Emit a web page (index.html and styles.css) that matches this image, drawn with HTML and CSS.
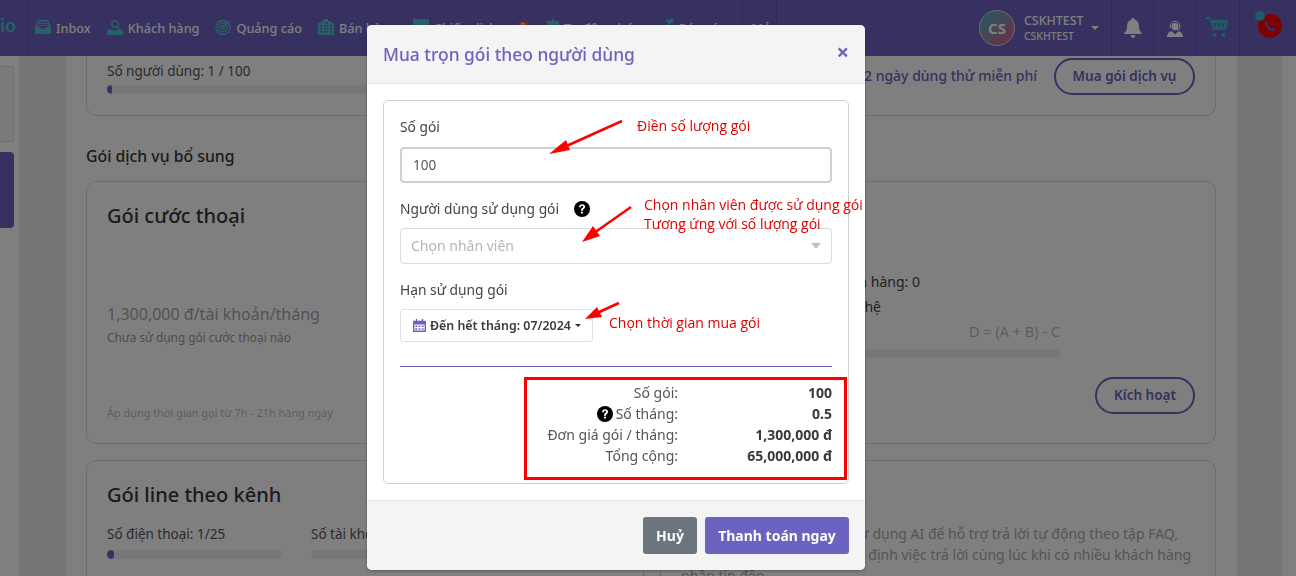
FILE: index.html
```html
<!DOCTYPE html>
<html lang="vi">
<head>
<meta charset="utf-8">
<title>Mua trọn gói theo người dùng</title>
<link rel="stylesheet" href="styles.css">
</head>
<body>
<div class="app">
  <header class="topbar">
    <div class="brand">io</div>
    <nav class="nav">
      <a class="nav-item"><svg class="nav-icon" viewBox="0 0 16 16"><path d="M3 1h10l3 7v7H0V8zM2.200 8H5l1 2h4l1-2h2.800L12 2.500H4z"/><path d="M4 4h8v1H4zM3.500 6h9v1h-9z"/></svg>Inbox</a>
      <a class="nav-item"><svg class="nav-icon" viewBox="0 0 16 16"><path d="M8 1a4 4 0 0 1 3 6.700l2 2.300-1 .7-2-2.300A4 4 0 1 1 8 1zm0 1.500a2.500 2.500 0 1 0 0 5 2.500 2.500 0 0 0 0-5z"/><path d="M0 16v-3c0-2 2-3 4-3l4 2 4-2c2 0 4 1 4 3v3z"/></svg>Khách hàng</a>
      <a class="nav-item"><svg class="nav-icon nav-icon-wide" viewBox="0 0 16 16" fill="none"><g stroke="currentColor" stroke-width="1.300" fill="none"><circle cx="8" cy="8.500" r="7"/><circle cx="8" cy="8.500" r="4.400"/><circle cx="8" cy="8.500" r="1.800"/><path d="M8 8.500 14 2"/></g></svg>Quảng cáo</a>
      <a class="nav-item nav-item-sales"><svg class="nav-icon" viewBox="0 0 16 16"><path d="M0 4h3V2h3V0h4v2h3v2h3v12H0zm2 2v1.500h2V6zm0 3v1.500h2V9zm0 3v1.500h2V12zm4-9v1.500h1.500V3zm2.500 0v1.500H10V3zM6 6v1.500h1.500V6zm2.500 0v1.500H10V6zM6 9v1.500h1.500V9zm2.500 0v1.500H10V9zM12 6v1.500h2V6zm0 3v1.500h2V9zm0 3v1.500h2V12zM6 12v1.500h4V12z" fill-rule="evenodd"/></svg>Bán hàng</a>
      <a class="nav-item nav-item-campaign"><svg class="nav-icon" viewBox="0 0 16 16"><rect width="16" height="16" rx="1"/></svg>Chiến dịch<span class="badge">9</span></a>
      <a class="nav-item nav-item-auto"><svg class="nav-icon nav-icon-tall" viewBox="0 0 12 16"><path d="M5 0h2v2h5v14H0V2h5z"/></svg>Tự động hóa</a>
      <a class="nav-item"><svg class="nav-icon nav-icon-tall" viewBox="0 0 12 16"><path d="M8 0h4v4H9v3h3v9H0V7h7V3H5V1h3z"/></svg>Báo cáo</a>
      <a class="nav-item nav-more">Mở</a>
    </nav>
    <div class="account">
      <div class="avatar">CS</div>
      <div class="account-names"><span class="account-name">CSKHTEST</span><span class="account-sub">CSKHTEST</span></div>
      <span class="caret"></span>
    </div>
    <div class="tool">
      <svg class="tool-bell" viewBox="0 0 18 20"><path d="M9 0c1 0 1.500.7 1.500 1.500C13.500 2.300 15 5 15 8c0 4 1 5.500 3 7.500V16H0v-.5C2 13.500 3 12 3 8c0-3 1.500-5.700 4.500-6.500C7.500.7 8 0 9 0zM6.500 17h5c-.5 2-1.500 3-2.500 3s-2-1-2.500-3z"/></svg>
    </div>
    <div class="tool">
      <svg class="tool-agent" viewBox="0 0 16 16"><path d="M4.500 5.500a3.500 3.500 0 0 1 7 0c0 2.200-1.500 3.800-3.500 3.800S4.500 7.700 4.500 5.500z"/><path class="agent-band" d="M3.200 7V5.200a4.800 4.800 0 0 1 9.600 0V7M12.800 7c0 1.300-1.500 1.800-3.300 1.800"/><path d="M0 16c0-3.400 1.700-5.200 4.800-5.700L8 13.500l3.200-3.200c3.100.5 4.800 2.300 4.800 5.700z"/></svg>
    </div>
    <div class="tool tool-cart-cell">
      <svg class="tool-cart" viewBox="0 0 22 22"><path d="M0 1h4l1 3h17l-2 10H7L3.500 3H0zM8 7v4h1.500V7zm4 0v4h1.500V7zm4 0v4h1.500V7z" fill-rule="evenodd"/><circle cx="8.500" cy="19" r="2"/><circle cx="17.500" cy="19" r="2"/></svg>
    </div>
    <div class="tool tool-phone">
      <span class="phone-ball"><svg viewBox="0 0 16 16"><path d="M3 1l3 3-1.500 2c1 2 3 4 5.500 5.500L12 10l3 3-2 2.500C7 15 1.500 9 1 3z"/></svg></span>
      <span class="phone-dot"></span>
    </div>
  </header>

  <div class="main">
    <aside class="rail">
      <div class="rail-box"></div>
      <div class="rail-box rail-box-active"></div>
    </aside>
    <div class="gutter"></div>
    <section class="content">
      <div class="card card-first">
        <div class="first-row">
          <div class="usage">
            <div class="usage-text">Số người dùng: 1 / 100</div>
            <div class="track"><div class="fill fill-tiny"></div></div>
          </div>
          <div class="trial">Còn 12 ngày dùng thử miễn phí</div>
          <a class="pill pill-buy">Mua gói dịch vụ</a>
        </div>
      </div>
      <h2 class="section-title">Gói dịch vụ bổ sung</h2>
      <div class="card card-call">
        <div class="col-left">
          <h3 class="card-title">Gói cước thoại</h3>
          <div class="price">1,300,000 đ/tài khoản/tháng</div>
          <div class="note">Chưa sử dụng gói cước thoại nào</div>
          <div class="apply">Áp dụng thời gian gọi từ 7h - 21h hàng ngày</div>
        </div>
        <div class="col-right">
          <div class="stat stat-a">Số cuộc gọi của khách hàng: 0</div>
          <div class="stat stat-b">Cước phí: Liên hệ</div>
          <div class="formula">D = (A + B) - C</div>
          <div class="track"></div>
          <a class="pill pill-activate">Kích hoạt</a>
        </div>
      </div>
      <div class="card card-line">
        <div class="col-left">
          <h3 class="card-title">Gói line theo kênh</h3>
          <div class="line-grid">
            <div>
              <div class="usage-text">Số điện thoại: 1/25</div>
              <div class="track"><div class="fill fill-small"></div></div>
            </div>
            <div>
              <div class="usage-text">Số tài khoản: 0</div>
              <div class="track"></div>
            </div>
          </div>
        </div>
        <div class="col-ai">
          <div class="ai-line ai-line-1">Sử dụng AI để hỗ trợ trả lời tự động theo tập FAQ,</div>
          <div class="ai-line ai-line-2">ổn định việc trả lời cùng lúc khi có nhiều khách hàng</div>
          <div class="ai-line">nhận tin đến</div>
        </div>
      </div>
    </section>
    <div class="gutter gutter-right"></div>
    <div class="rail-end"></div>
  </div>
</div>

<div class="overlay"></div>

<div class="modal">
  <div class="modal-head">
    <h1 class="modal-title">Mua trọn gói theo người dùng</h1>
    <span class="modal-close">×</span>
  </div>
  <div class="modal-body">
    <div class="form-box">
      <label class="field-label">Số gói</label>
      <div class="input">100</div>
      <label class="field-label field-label-help">Người dùng sử dụng gói
        <svg class="help help-gap" viewBox="0 0 16 16"><circle cx="8" cy="8" r="8"/><path class="help-q" d="M5 6.200C5 4.300 6.400 3.200 8.100 3.200c1.700 0 3 1 3 2.600 0 2-2.200 2.200-2.200 3.900H7c0-2.600 2.100-2.700 2.100-3.900 0-.6-.5-1-1.100-1-.7 0-1.100.5-1.200 1.400zM7 10.700h1.900v1.900H7z"/></svg>
      </label>
      <div class="select"><span>Chọn nhân viên</span><i class="select-caret"></i></div>
      <label class="field-label field-label-date">Hạn sử dụng gói</label>
      <div class="date-btn">
        <svg class="cal" viewBox="0 0 14 14"><path d="M0 2h3V0h1.500v2h5V0H11v2h3v12H0zm1.500 4v6.500h11V6z" fill-rule="evenodd"/><path d="M2.500 7h2v1.500h-2zM6 7h2v1.500H6zM9.500 7h2v1.500h-2zM2.500 10h2v1.500h-2zM6 10h2v1.500H6zM9.500 10h2v1.500h-2z"/></svg>
        <span>Đến hết tháng: 07/2024</span><i class="mini-caret"></i>
      </div>
      <div class="rule"></div>
      <div class="summary">
        <div class="sum-label">Số gói:</div><div class="sum-value">100</div>
        <div class="sum-label"><svg class="help" viewBox="0 0 16 16"><circle cx="8" cy="8" r="8"/><path class="help-q" d="M5 6.200C5 4.300 6.400 3.200 8.100 3.200c1.700 0 3 1 3 2.600 0 2-2.200 2.200-2.200 3.900H7c0-2.600 2.100-2.700 2.100-3.900 0-.6-.5-1-1.100-1-.7 0-1.100.5-1.200 1.400zM7 10.700h1.900v1.900H7z"/></svg> Số tháng:</div><div class="sum-value">0.5</div>
        <div class="sum-label">Đơn giá gói / tháng:</div><div class="sum-value">1,300,000 đ</div>
        <div class="sum-label">Tổng cộng:</div><div class="sum-value">65,000,000 đ</div>
      </div>
    </div>
  </div>
  <div class="modal-foot">
    <a class="btn btn-gray">Huỷ</a>
    <a class="btn btn-primary">Thanh toán ngay</a>
  </div>
</div>

<svg class="arrows" viewBox="0 0 1296 576">
  <path class="arrow-line" d="M622 121 562 148"/><path class="arrow-head" d="M549 154 566 140 570 150z"/>
  <path class="arrow-line" d="M631 207 594 233"/><path class="arrow-head" d="M582 242 593 226 600 236z"/>
  <path class="arrow-line" d="M619 303 597 313"/><path class="arrow-head" d="M585 319 597 307 602 317z"/>
</svg>
<div class="note-red note-1">Điền số lượng gói</div>
<div class="note-red note-2">Chọn nhân viên được sử dụng gói<br>Tương ứng với số lượng gói</div>
<div class="note-red note-3">Chọn thời gian mua gói</div>
<div class="redbox"></div>
</body>
</html>
```
FILE: styles.css
```css
* { box-sizing: border-box; }
html, body { margin: 0; height: 100%; overflow: hidden; }
body { font-family: "Noto Sans", "Open Sans", sans-serif; font-size: 14px; color: #444; background: #fff; }
h1, h2, h3, p { margin: 0; font-weight: 500; }

.app { height: 576px; display: flex; flex-direction: column; overflow: hidden; }

.topbar { height: 56px; flex: none; background: #6c63c0; display: flex; align-items: stretch; color: #fff; }
.brand { width: 28px; border-right: 1px solid #5a51ab; color: #4fc3d0; font-size: 18px; font-weight: 600; line-height: 50px; text-align: right; padding-right: 16px; }
.nav { display: flex; align-items: center; gap: 16px; padding: 0 5px 0 7px; width: 748px; flex: none; white-space: nowrap; overflow: hidden; align-self: stretch; }
.nav-item { display: flex; align-items: center; gap: 5px; font-size: 12.700px; font-weight: 500; }
.nav-item-sales { width: 80px; }
.nav-item-campaign { width: 118px; }
.nav-item-auto { width: 100px; margin-left: 2px; }
.nav-icon { width: 16px; height: 16px; fill: #4fc3d0; color: #4fc3d0; flex: none; margin-top: -2px; }
.nav-icon-wide { fill: none; }
.nav-icon-tall { width: 12px; }
.badge { width: 12px; height: 12px; border-radius: 50%; background: #ff5a2a; font-size: 9px; text-align: center; line-height: 12px; margin: -2px 0 0 auto; }
.nav-more { margin-left: auto; border-left: 1px solid #5a51ab; align-self: stretch; padding-left: 8px; }
.account { width: 335px; flex: none; display: flex; align-items: center; padding-left: 202px; border-left: 1px solid #5a51ab; }
.avatar { width: 36px; height: 36px; flex: none; border-radius: 50%; border: 1px solid #d8d8d8; background: linear-gradient(135deg, #3fb6d0, #e05a8a); color: #fff; font-weight: 700; font-size: 15px; line-height: 34px; text-align: center; }
.account-names { display: flex; flex-direction: column; margin-left: 9px; line-height: 14px; font-weight: 500; }
.account-name { font-size: 12.400px; }
.account-sub { font-size: 10.400px; margin-top: 1px; }
.caret { width: 0; height: 0; border: 4px solid transparent; border-top: 4px solid #fff; border-bottom: 0; margin-left: 8px; }
.tool { border-left: 1px solid #5a51ab; width: 42px; flex: none; display: flex; align-items: center; justify-content: center; }
.tool-cart-cell { width: 44px; }
.tool:last-child { flex: 1; border-left: 1px solid #5a51ab; }
.tool-bell { width: 18px; height: 20px; fill: #fff; }
.tool-agent { width: 16px; height: 16px; fill: #fff; margin-top: 1px; }
.agent-band { fill: none; stroke: #fff; stroke-width: 1; }
.tool-cart { width: 22px; height: 22px; fill: #3fb6c4; margin: -2px 0 0 -2px; }
.tool-phone { position: relative; }
.phone-ball { width: 24px; height: 24px; border-radius: 50%; background: #ff0000; display: flex; align-items: center; justify-content: center; margin: 0 0 4px 3px; }
.phone-ball svg { width: 12px; height: 12px; fill: #5b62d8; }
.phone-dot { position: absolute; left: 15px; top: 11px; width: 10px; height: 10px; border-radius: 50%; background: #3fb6c4; }

.main { flex: 1; display: flex; min-height: 0; }
.rail { width: 19px; flex: none; padding-top: 10px; display: flex; flex-direction: column; gap: 10px; }
.rail-box { width: 14px; height: 76px; border: 1px solid #dde0e6; border-left: 0; border-radius: 0 4px 4px 0; background: #f4f4f4; }
.rail-box-active { background: #6c63c0; border-color: #6c63c0; }
.gutter { width: 47px; flex: none; background: #ececec; }
.gutter-right { width: 45px; }
.rail-end { width: 14px; flex: none; }
.content { flex: 1; padding: 0 21px 0 20px; min-width: 0; overflow: hidden; }

.card { border: 1px solid #d3dde8; border-radius: 10px; background: #fff; }
.card-first { border-top: 0; border-radius: 0 0 10px 10px; height: 60px; padding: 7px 20px 0; }
.first-row { display: flex; }
.usage { width: 500px; }
.usage-text { font-size: 13.500px; line-height: 16px; color: #555; }
.track { height: 9px; border-radius: 5px; background: #eceef2; margin-top: 6px; overflow: hidden; }
.fill { height: 100%; background: #6c63c0; border-radius: 5px; }
.fill-tiny { width: 1%; }
.fill-small { width: 4%; }
.trial { margin-left: auto; color: #6c63c0; font-weight: 500; line-height: 26px; }
.pill { display: block; border: 2px solid #6c63c0; border-radius: 19px; color: #6c63c0; font-weight: 600; height: 37px; line-height: 33px; text-align: center; font-size: 13.500px; }
.pill-buy { width: 141px; margin: -5px 0 0 17px; }
.section-title { font-size: 15.800px; line-height: 20px; margin: 30px 0 15px; color: #363636; }
.card-call { height: 263px; display: flex; padding: 0 20px; }
.col-left { width: 553px; flex: none; }
.card-title { font-size: 20px; line-height: 26px; color: #363636; padding-top: 21px; }
.price { font-size: 16px; line-height: 20px; margin-top: 75px; color: #9fa6ae; }
.note { font-size: 11.800px; line-height: 16px; margin-top: 5px; color: #949aa0; }
.apply { font-size: 10.900px; line-height: 14px; margin-top: 61px; color: #bcbcbc; }
.col-right { flex: 1; padding-top: 90px; }
.stat { font-size: 14px; line-height: 20px; margin-bottom: 5px; text-align: right; white-space: nowrap; color: #444; }
.stat-a { width: 260px; }
.stat-b { width: 221px; }
.formula { width: 400px; text-align: right; color: #bbb; font-size: 14.500px; line-height: 18px; margin-top: 5px; }
.col-right .track { width: 400px; margin-top: 9px; }
.pill-activate { width: 100px; margin: 19px 0 0 auto; }
.card-line { margin-top: 16px; height: 200px; display: flex; padding: 0 20px; }
.card-line .col-left { width: 537px; border-right: 1px solid #d3dde8; margin-right: 16px; }
.line-grid { display: grid; grid-template-columns: 175px 175px; column-gap: 29px; margin-top: 18px; }
.line-grid .track { margin-top: 8px; }
.col-ai { flex: 1; border-left: 1px solid #d3dde8; padding: 62px 0 0 20px; }
.ai-line { font-size: 14px; line-height: 21px; color: #aaa; white-space: nowrap; }
.ai-line-1 { width: 497px; text-align: right; }
.ai-line-2 { width: 510px; text-align: right; }

.overlay { position: fixed; inset: 0; background: rgba(0, 0, 0, .5); }

.modal { position: fixed; left: 367px; top: 25px; width: 498px; height: 545px; background: #fff; border-radius: 5px; box-shadow: 0 1px 3px rgba(0, 0, 0, .3); display: flex; flex-direction: column; overflow: hidden; }
.modal-head { height: 59px; flex: none; background: #f4f4f4; border-bottom: 1px solid #e3e3e3; display: flex; align-items: center; justify-content: space-between; padding: 0 16px; }
.modal-title { font-size: 17.400px; font-weight: 500; color: #6c63c0; }
.modal-close { color: #6c63c0; font-size: 22px; font-weight: 700; line-height: 20px; margin-top: -6px; }
.modal-body { flex: 1; padding: 16px; }
.form-box { height: 384px; border: 1px solid #cfcfcf; border-radius: 5px; padding: 16px 16px 0; }
.field-label { display: block; font-size: 13.800px; line-height: 20px; color: #444; }
.field-label-help { margin-top: 16px; display: flex; align-items: center; }
.field-label-date { margin-top: 16px; }
.input { height: 36px; border: 2px solid #ccd1d6; border-radius: 4px; margin-top: 10px; padding-left: 11px; line-height: 32px; color: #555; font-size: 13.500px; }
.select { height: 36px; border: 1px solid #dcdcdc; border-radius: 4px; margin-top: 9px; padding: 0 10px 1px; display: flex; align-items: center; justify-content: space-between; color: #b5b5b5; font-size: 14px; }
.select-caret { width: 0; height: 0; border: 5px solid transparent; border-top: 6px solid #c4c4c4; border-bottom: 0; }
.date-btn { width: 193px; height: 33px; border: 1px solid #e1e1e1; border-radius: 3px; margin-top: 9px; padding-left: 12px; display: flex; align-items: center; font-size: 12.400px; font-weight: 600; color: #3a3a3a; white-space: nowrap; }
.cal { width: 13px; height: 13px; fill: #6c63c0; flex: none; margin-right: 4px; }
.mini-caret { width: 0; height: 0; border: 3px solid transparent; border-top: 3px solid #333; border-bottom: 0; margin-left: 4px; }
.rule { height: 1px; background: #6c63c0; margin-top: 24px; }
.summary { display: grid; grid-template-columns: 278px 1fr; grid-auto-rows: 21px; margin-top: 15px; line-height: 21px; font-size: 14px; }
.sum-label { text-align: right; color: #555; display: flex; justify-content: flex-end; align-items: center; gap: 3px; }
.sum-value { text-align: right; font-weight: 700; color: #3a3a3a; }
.help { width: 16px; height: 16px; fill: #000; flex: none; }
.help-gap { margin-left: 15px; }
.help-q { fill: #fff; }
.modal-foot { height: 70px; flex: none; background: #f4f4f4; border-top: 1px solid #e3e3e3; display: flex; justify-content: flex-end; align-items: flex-start; gap: 8px; padding: 16px 16px 0; }
.btn { height: 37px; border-radius: 3px; color: #fff; font-weight: 700; font-size: 14px; line-height: 37px; text-align: center; }
.btn-gray { width: 54px; background: #6c757d; }
.btn-primary { width: 144px; background: #6c63c0; }

.arrows { position: fixed; left: 0; top: 0; width: 1296px; height: 576px; pointer-events: none; }
.arrow-line { stroke: #ff0000; stroke-width: 2.500; fill: none; }
.arrow-head { fill: #ff0000; }
.note-red { position: fixed; color: #e00000; font-family: "Open Sans", sans-serif; font-size: 14px; line-height: 19px; white-space: nowrap; }
.note-1 { left: 637px; top: 116px; }
.note-2 { left: 644px; top: 195px; }
.note-3 { left: 609px; top: 313px; }
.redbox { position: fixed; left: 524px; top: 377px; width: 323px; height: 103px; border: 3px solid #ff0000; }
```
